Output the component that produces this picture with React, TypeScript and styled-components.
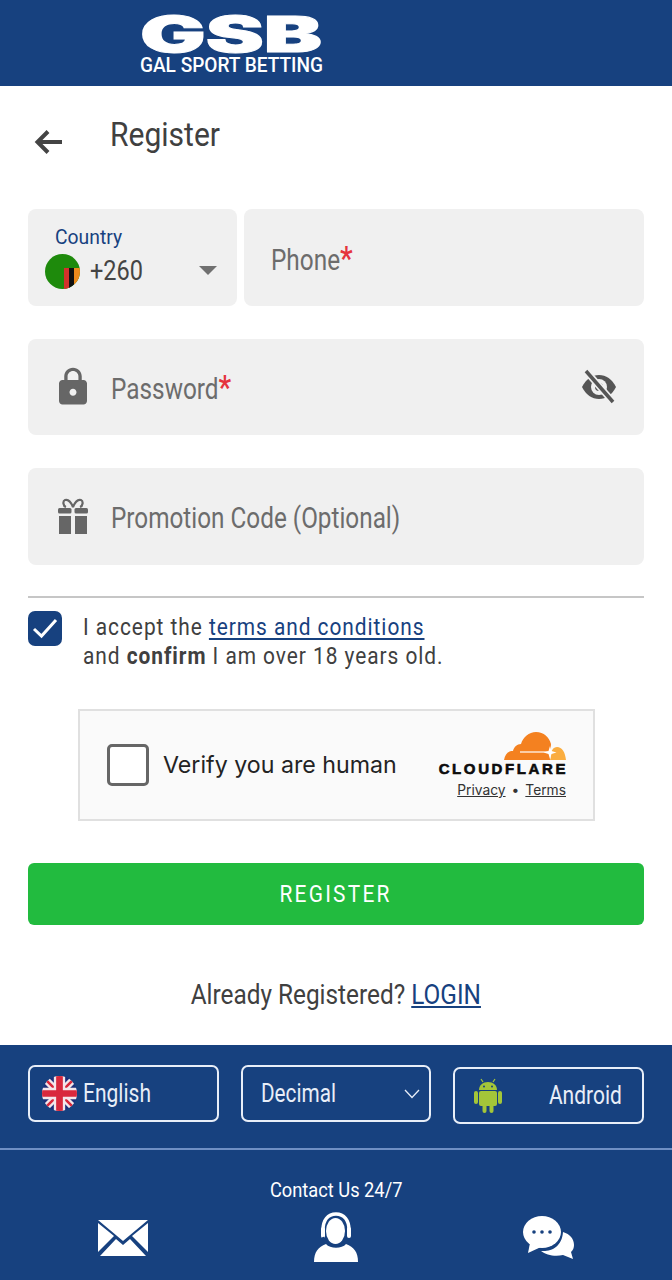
import React from 'react';
import styled, { createGlobalStyle } from 'styled-components';
import { MdLock } from 'react-icons/md';

const GlobalStyle = createGlobalStyle`
	* {
		box-sizing: border-box;
	}
	html,
	body {
		margin: 0;
		padding: 0;
		background: #fff;
		font-family: Roboto, 'Liberation Sans', sans-serif;
	}
`;

const Page = styled.div`
	width: 672px;
	height: 1280px;
	display: flex;
	flex-direction: column;
	overflow: hidden;
`;

const Header = styled.header`
	height: 86px;
	background: #17417f;
	padding: 12px 0 0 138px;
	flex-shrink: 0;
`;

const LogoSvg = styled.svg`
	display: block;
	overflow: visible;
`;

const Main = styled.main`
	flex: 1;
	padding: 0 28px;
	display: flex;
	flex-direction: column;
`;

const TitleRow = styled.div`
	height: 123px;
	display: flex;
	align-items: flex-start;
`;

const BackIcon = styled.svg`
	width: 30px;
	height: 26px;
	margin: 43px 0 0 6px;
`;

const Narrow = styled.span<{ $scale?: number; $origin?: string; $left?: number; $right?: number }>`
	display: inline-block;
	white-space: nowrap;
	margin-left: ${(p) => p.$left ?? 0}px;
	margin-right: ${(p) => p.$right ?? 0}px;
	transform: scaleX(${(p) => p.$scale ?? 0.87});
	transform-origin: ${(p) => p.$origin ?? 'left'} center;
`;

const Title = styled.h1`
	margin: 27px 0 0 46px;
	font-size: 33px;
	line-height: 44px;
	font-weight: 400;
	color: #404040;
`;

const FieldRow = styled.div`
	display: flex;
	gap: 7px;
	margin-bottom: 33px;
`;

const Field = styled.div<{ $width?: string }>`
	position: relative;
	height: 96.5px;
	flex: ${(p) => p.$width ?? '1'};
	background: #f0f0f0;
	border-radius: 8px;
	display: flex;
	align-items: center;
	color: #666;
`;

const CountryField = styled(Field)`
	display: block;
	padding: 15px 0 0 17px;
`;

const CountryLabel = styled.div`
	font-size: 21px;
	line-height: 26px;
	margin-left: 10px;
	color: #17417f;
`;

const CountryValue = styled.div`
	display: flex;
	align-items: center;
	gap: 10px;
	font-size: 28px;
	line-height: 36px;
	margin-top: 3px;
	color: #444;
`;

const FlagCircle = styled.svg`
	width: 35px;
	height: 35px;
	flex-shrink: 0;
`;

const Caret = styled.div`
	position: absolute;
	right: 20px;
	top: 57px;
	width: 0;
	height: 0;
	border-left: 9px solid transparent;
	border-right: 9px solid transparent;
	border-top: 9px solid #707070;
`;

const Placeholder = styled.div<{ $left: number; $up?: number }>`
	margin-left: ${(p) => p.$left}px;
	margin-bottom: ${(p) => p.$up ?? 0}px;
	font-size: 29px;
	line-height: 36px;
	color: #6c6c6c;
`;

const Required = styled.span`
	color: #e5343d;
	font-size: 34px;
	font-weight: 500;
	line-height: 20px;
`;

const LeadIcon = styled.div`
	width: 34px;
	margin-left: 28px;
	display: flex;
	justify-content: center;
	color: #666;
	flex-shrink: 0;

	svg {
		flex-shrink: 0;
	}
`;

const EyeIcon = styled.svg`
	position: absolute;
	right: 27px;
	top: 30px;
	width: 36px;
	height: 36px;
`;

const Divider = styled.hr`
	margin: -2px 0 13px;
	border: 0;
	border-top: 2px solid #c6c6c6;
`;

const AcceptRow = styled.div`
	display: flex;
	gap: 21px;
	margin-bottom: 38px;
`;

const CheckBox = styled.div`
	width: 34px;
	height: 35px;
	background: #17417f;
	border-radius: 7px;
	display: flex;
	align-items: center;
	justify-content: center;
	flex-shrink: 0;
`;

const AcceptText = styled.div`
	font-size: 24px;
	line-height: 29px;
	color: #404040;
	letter-spacing: 1.1px;
	padding-top: 2px;

	a {
		color: #17417f;
		text-decoration: underline;
		text-underline-offset: 3px;
	}
	b {
		font-weight: 700;
	}
`;

const Turnstile = styled.div`
	width: 517px;
	height: 112px;
	margin: 0 0 42px 50px;
	background: #fafafa;
	border: 2px solid #e0e0e0;
	display: flex;
	align-items: center;
	padding: 0 27px;
`;

const VerifyBox = styled.div`
	width: 42px;
	height: 42px;
	border: 3px solid #666;
	border-radius: 5px;
	background: #fff;
	flex-shrink: 0;
`;

const VerifyText = styled.div`
	margin-left: 14px;
	font-family: Inter, Roboto, sans-serif;
	font-size: 23.2px;
	color: #232323;
	flex: 1;
`;

const Brand = styled.div`
	width: 130px;
	display: flex;
	flex-direction: column;
	align-items: flex-end;
	margin-top: 2px;
`;

const BrandName = styled.div`
	font-family: 'Liberation Sans', Arial, sans-serif;
	font-weight: 700;
	font-size: 15px;
	line-height: 14px;
	letter-spacing: 2.6px;
	color: #0c0c0c;
	margin-top: 2px;
	margin-right: -2px;
	-webkit-text-stroke: 0.6px #0c0c0c;
`;

const BrandLinks = styled.div`
	margin-top: 6px;
	font-family: Inter, Roboto, sans-serif;
	font-size: 13.8px;
	line-height: 17px;
	color: #333;
	display: flex;
	gap: 6px;

	a {
		text-decoration: underline;
		color: #333;
	}
`;

const RegisterButton = styled.button`
	height: 62px;
	border: 0;
	border-radius: 6px;
	background: #22bb3f;
	color: #fff;
	font-family: inherit;
	font-size: 24px;
	letter-spacing: 2.6px;
	margin-bottom: 50px;
`;

const LoginLine = styled.div`
	text-align: center;
	font-size: 28px;
	line-height: 40px;
	color: #404040;

	a {
		color: #17417f;
		text-decoration: underline;
	}
`;

const Footer = styled.footer`
	height: 235px;
	background: #17417f;
	flex-shrink: 0;
	color: #fff;
`;

const ControlRow = styled.div`
	height: 105px;
	padding: 19.5px 28px 0;
	display: grid;
	grid-template-columns: 190.5px 190.5px 190.5px;
	column-gap: 22px;
	border-bottom: 2px solid #6f8fc4;
`;

const Control = styled.div<{ $down?: number; $justify?: string }>`
	position: relative;
	height: 57.5px;
	margin-top: ${(p) => p.$down ?? 0}px;
	border: 2px solid #e8eef8;
	border-radius: 7px;
	display: flex;
	align-items: center;
	justify-content: ${(p) => p.$justify ?? 'flex-start'};
	padding: 0 12px;
	font-size: 25px;
	color: #e8eef8;
`;

const Chevron = styled.svg`
	position: absolute;
	right: 9px;
	top: 22px;
	width: 16px;
	height: 10px;
`;

const ContactTitle = styled.div`
	text-align: center;
	font-size: 21px;
	line-height: 26px;
	margin-top: 27px;
`;

const ContactIcons = styled.div`
	display: grid;
	grid-template-columns: 1fr 1fr 1fr;
	padding: 0 17px;
	margin-top: 4px;
	height: 60px;
	align-items: center;
	justify-items: center;
`;

const App = () => {
	return (
		<Page>
			<GlobalStyle />
			<Header>
				<LogoSvg width="190" height="64" viewBox="0 0 190 64">
					<text
						x="2"
						y="39.5"
						textLength="182"
						lengthAdjust="spacingAndGlyphs"
						fontFamily="Inter"
						fontWeight="900"
						fontSize="50"
						fill="#fff"
						stroke="#fff"
						strokeWidth="1"
					>
						GSB
					</text>
					<text
						x="2"
						y="60"
						textLength="183"
						lengthAdjust="spacingAndGlyphs"
						fontFamily="Roboto"
						fontWeight="500"
						fontSize="20"
						fill="#fff"
					>
						GAL SPORT BETTING
					</text>
				</LogoSvg>
			</Header>
			<Main>
				<TitleRow>
					<BackIcon viewBox="0 0 30 26">
						<path
							d="M28 13H4M14 2.5 3.5 13 14 23.5"
							fill="none"
							stroke="#444"
							strokeWidth="4"
						/>
					</BackIcon>
					<Title>
						<Narrow $scale={0.91}>Register</Narrow>
					</Title>
				</TitleRow>
				<FieldRow>
					<CountryField $width="0 0 209px">
						<CountryLabel>
							<Narrow $scale={0.92}>Country</Narrow>
						</CountryLabel>
						<CountryValue>
							<FlagCircle viewBox="0 0 35 35">
								<clipPath id="zm">
									<circle cx="17.5" cy="17.5" r="17.5" />
								</clipPath>
								<g clipPath="url(#zm)">
									<rect width="35" height="35" fill="#1e8a0c" />
									<rect x="19" y="14" width="5" height="21" fill="#d3322b" />
									<rect x="24" y="14" width="5" height="21" fill="#111" />
									<rect x="29" y="14" width="6" height="21" fill="#ee8a1c" />
								</g>
							</FlagCircle>
							<Narrow $scale={0.84}>+260</Narrow>
						</CountryValue>
						<Caret />
					</CountryField>
					<Field $width="1">
						<Placeholder $left={27} $up={-6}>
							<Narrow $scale={0.84}>
								Phone<Required>*</Required>
							</Narrow>
						</Placeholder>
					</Field>
				</FieldRow>
				<FieldRow>
					<Field>
						<LeadIcon>
							<MdLock size={42} />
						</LeadIcon>
						<Placeholder $left={21} $up={-5}>
							<Narrow $scale={0.84}>
								Password<Required>*</Required>
							</Narrow>
						</Placeholder>
						<EyeIcon viewBox="0 0 36 36">
							<path
								d="M1 18C5 10 11 6 18 6s13 4 17 12c-4 8-10 12-17 12S5 26 1 18Z"
								fill="#555"
							/>
							<circle cx="18" cy="18" r="8" fill="#f0f0f0" />
							<circle cx="18" cy="18" r="4" fill="#555" />
							<path d="M5 2 32 33" stroke="#f0f0f0" strokeWidth="7" />
							<path d="M5 2 32 33" stroke="#555" strokeWidth="3.5" />
						</EyeIcon>
					</Field>
				</FieldRow>
				<FieldRow>
					<Field>
						<LeadIcon>
							<svg width="30" height="36" viewBox="0 0 30 36">
								<path
									d="M15 9c-2-5-5-8-8-7-2.500 1-2 6 1 7M15 9c2-5 5-8 8-7 2.500 1 2 6-1 7"
									fill="none"
									stroke="#666"
									strokeWidth="2.2"
								/>
								<rect x="0" y="10" width="13.500" height="5.500" rx="1.500" fill="#666" />
								<rect x="16.500" y="10" width="13.500" height="5.500" rx="1.500" fill="#666" />
								<rect x="1" y="18" width="12" height="18" fill="#666" />
								<rect x="17" y="18" width="12" height="18" fill="#666" />
							</svg>
						</LeadIcon>
						<Placeholder $left={21} $up={-4}>
							<Narrow $scale={0.838}>Promotion Code (Optional)</Narrow>
						</Placeholder>
					</Field>
				</FieldRow>
				<Divider />
				<AcceptRow>
					<CheckBox>
						<svg width="26" height="22" viewBox="0 0 26 22">
							<path
								d="M2 12 9.500 19 24 3"
								fill="none"
								stroke="#fff"
								strokeWidth="3"
							/>
						</svg>
					</CheckBox>
					<AcceptText>
						<Narrow>
							I accept the <a href="#">terms and conditions</a>
						</Narrow>
						<br />
						<Narrow>
							and <b>confirm</b> I am over 18 years old.
						</Narrow>
					</AcceptText>
				</AcceptRow>
				<Turnstile>
					<VerifyBox />
					<VerifyText>Verify you are human</VerifyText>
					<Brand>
						<svg width="62" height="28" viewBox="0 0 62 28">
							<path
								d="M0 28c1-6 4-9 9-9 1-4 4-7 8-7 2-7 8-12 15-12 8 0 13 5 15 12l-1 16Z"
								fill="#f48120"
							/>
							<path
								d="M46 28c1-2 1-5 1-7 1-4 3-6 6-6 5 0 8 5 9 13Z"
								fill="#faad3f"
							/>
							<path d="M16 20h28" stroke="#fff" strokeWidth="1.2" />
							<path d="M46 14l1.500 5 5 1.500-5 1.500-1.500 5-1.500-5-5-1.500 5-1.500Z" fill="#fff" />
						</svg>
						<BrandName>CLOUDFLARE</BrandName>
						<BrandLinks>
							<a href="#">Privacy</a>
							<span>•</span>
							<a href="#">Terms</a>
						</BrandLinks>
					</Brand>
				</Turnstile>
				<RegisterButton>
					<Narrow $origin="center">REGISTER</Narrow>
				</RegisterButton>
				<LoginLine>
					<Narrow $origin="center">
						Already Registered? <a href="#">LOGIN</a>
					</Narrow>
				</LoginLine>
			</Main>
			<Footer>
				<ControlRow>
					<Control>
						<svg width="35" height="35" viewBox="0 0 34 34">
							<clipPath id="uk">
								<circle cx="17" cy="17" r="17" />
							</clipPath>
							<g clipPath="url(#uk)">
								<rect width="34" height="34" fill="#1c2f7a" />
								<path d="M0 0 34 34M34 0 0 34" stroke="#f3e6ea" strokeWidth="7" />
								<path d="M0 0 34 34M34 0 0 34" stroke="#d9283c" strokeWidth="2.500" />
								<path d="M17 0V34M0 17H34" stroke="#f3e6ea" strokeWidth="11" />
								<path d="M17 0V34M0 17H34" stroke="#d9283c" strokeWidth="6.500" />
							</g>
						</svg>
						<Narrow $scale={0.84} $left={6}>
							English
						</Narrow>
					</Control>
					<Control>
						<Narrow $scale={0.83} $left={6}>
							Decimal
						</Narrow>
						<Chevron viewBox="0 0 16 10">
							<path d="M1 1 8 8.500 15 1" fill="none" stroke="#e8eef8" strokeWidth="1.300" />
						</Chevron>
					</Control>
					<Control $down={2} $justify="space-between">
						<svg width="28" height="35" viewBox="0 0 28 35" style={{ marginLeft: 7 }}>
							<path
								d="M7 1l2 3M21 1l-2 3"
								stroke="#a4c639"
								strokeWidth="1.200"
							/>
							<path d="M5 12c0-5 4-8 9-8s9 3 9 8Z" fill="#a4c639" />
							<rect x="5" y="13" width="18" height="15" rx="2" fill="#a4c639" />
							<rect x="0" y="13" width="4" height="13" rx="2" fill="#a4c639" />
							<rect x="24" y="13" width="4" height="13" rx="2" fill="#a4c639" />
							<rect x="8.500" y="26" width="4" height="9" rx="2" fill="#a4c639" />
							<rect x="15.500" y="26" width="4" height="9" rx="2" fill="#a4c639" />
							<circle cx="10" cy="8.500" r="1" fill="#17417f" />
							<circle cx="18" cy="8.500" r="1" fill="#17417f" />
						</svg>
						<Narrow $scale={0.84} $origin="right" $right={8}>
							Android
						</Narrow>
					</Control>
				</ControlRow>
				<ContactTitle>
					<Narrow $origin="center">Contact Us 24/7</Narrow>
				</ContactTitle>
				<ContactIcons>
					<svg width="50" height="37" viewBox="0 0 50 37">
						<path d="M0 1 25 22 50 1Z" fill="#fff" />
						<path d="M0 4V33L16 17ZM50 4V33L34 17Z" fill="#fff" />
						<path d="M2 37 18 20 25 26 32 20 48 37Z" fill="#fff" />
					</svg>
					<svg width="44" height="50" viewBox="0 0 44 50">
						<path
							d="M9 18C9 8 14 2 22 2s13 6 13 16"
							fill="none"
							stroke="#fff"
							strokeWidth="3.500"
						/>
						<ellipse cx="21.500" cy="19" rx="9.500" ry="13" fill="#fff" />
						<rect x="7" y="15" width="4" height="11" rx="2" fill="#fff" />
						<rect x="33" y="15" width="4" height="11" rx="2" fill="#fff" />
						<path d="M9 25c1 6 6 9 14 9" fill="none" stroke="#17417f" strokeWidth="2" />
						<path d="M0 50c0-10 4-15 12-18 4 5 16 5 20 0 8 3 12 8 12 18Z" fill="#fff" />
					</svg>
					<svg width="52" height="43" viewBox="0 0 52 43">
						<ellipse cx="19" cy="16" rx="19" ry="16" fill="#fff" />
						<path d="M7 27 5 37 18 31Z" fill="#fff" />
						<circle cx="11" cy="16" r="1.800" fill="#17417f" />
						<circle cx="19" cy="16" r="1.800" fill="#17417f" />
						<circle cx="27" cy="16" r="1.800" fill="#17417f" />
						<path
							d="M18 35c10 1 21-4 22-19 7 2 11 7 11 13 0 3-1 5-3 7l2 7-10-4c-8 2-17 0-22-4Z"
							fill="#fff"
						/>
					</svg>
				</ContactIcons>
			</Footer>
		</Page>
	);
};

export default App;
